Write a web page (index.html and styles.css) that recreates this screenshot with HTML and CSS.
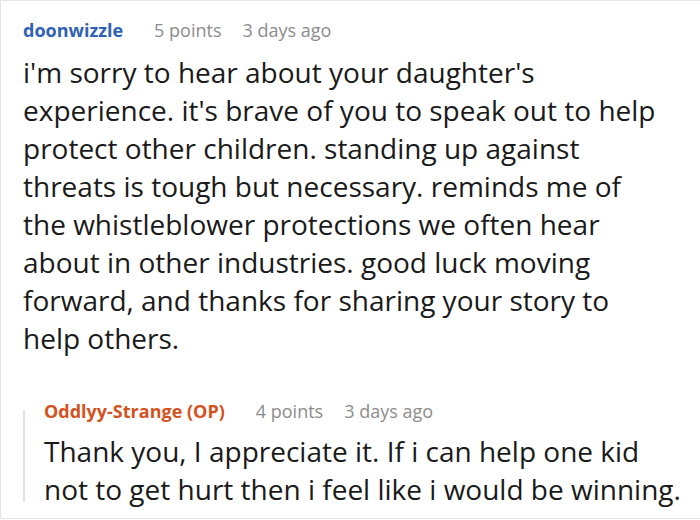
FILE: index.html
```html
<!DOCTYPE html>
<html>
<head>
<meta charset="utf-8">
<link rel="stylesheet" href="styles.css">
</head>
<body>
<div class="card">
  <div class="comment">
    <div class="meta">
      <span class="author">doonwizzle</span>
      <span class="info">5 points</span>
      <span class="info">3 days ago</span>
    </div>
    <p class="text">i'm sorry to hear about your daughter's experience. it's brave of you to speak out to help protect other children. standing up against threats is tough but necessary. reminds me of the whistleblower protections we often hear about in other industries. good luck moving forward, and thanks for sharing your story to help others.</p>
  </div>
  <div class="reply">
    <div class="meta">
      <span class="author op">Oddlyy-Strange (OP)</span>
      <span class="info">4 points</span>
      <span class="info">3 days ago</span>
    </div>
    <p class="text reply-text">Thank you, I appreciate it. If i can help one kid not to get hurt then i feel like i would be winning.</p>
  </div>
</div>
</body>
</html>
```
FILE: styles.css
```css
html, body {
  margin: 0;
  padding: 0;
  background: #fff;
}
body {
  font-family: "Open Sans", "Noto Sans", sans-serif;
  color: #1a1a1a;
}
.card {
  box-sizing: border-box;
  width: 720px;
  height: 519px;
  border: 1px solid #e4e4e4;
  border-right: none;
  padding: 17px 0 0 22px;
}
.meta {
  display: flex;
  align-items: baseline;
  gap: 21px;
  font-size: 18px;
  line-height: 24px;
}
.author {
  font-weight: bold;
  color: #2f62b4;
  margin-right: 10px;
}
.author.op {
  color: #d4521e;
}
.info {
  color: #8c8c8c;
}
.text {
  margin: 11px 0 0;
  font-size: 28px;
  line-height: 38px;
  width: 640px;
}
.reply {
  position: relative;
  margin-top: 42px;
  padding-left: 21px;
}
.reply::before {
  content: "";
  position: absolute;
  left: 0;
  top: 11px;
  bottom: 6px;
  width: 2px;
  background: #e2e2e2;
}
.reply-text {
  margin-top: 9px;
  width: 642px;
}
```
